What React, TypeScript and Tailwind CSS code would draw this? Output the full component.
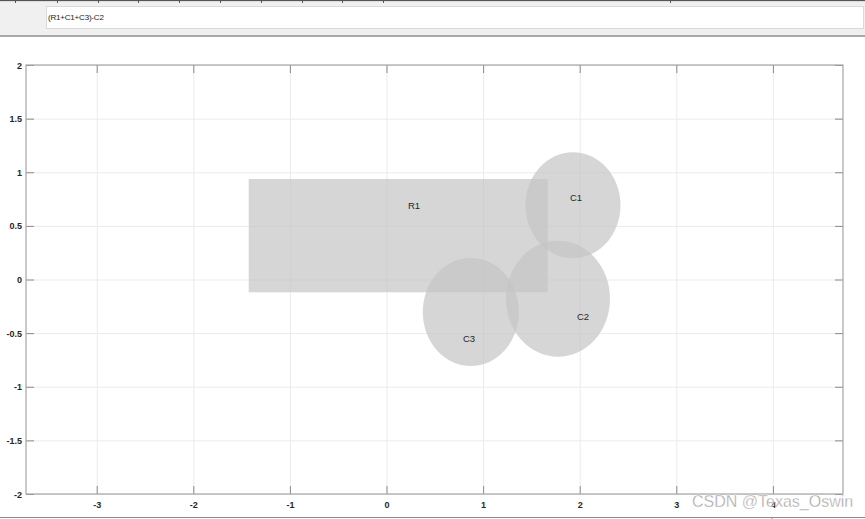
import React from "react";

const xTicks = [-3, -2, -1, 0, 1, 2, 3, 4];
const yTicks = [2, 1.5, 1, 0.5, 0, -0.5, -1, -1.5, -2];

// axes box in page pixels
const L = 26;
const R = 843;
const T = 65;
const B = 494;
const x0 = 387;
const xUnit = 96.6;
const y0 = 280;
const yUnit = 107.25;

const px = (v: number) => x0 + v * xUnit;
const py = (v: number) => y0 - v * yUnit;

const tabStops = [15, 57, 98, 138, 179, 220, 261, 302, 342, 383, 670];

const shapeFill = "#c4c4c4";

const Plot: React.FC = () => {
  return (
    <svg
      width={865}
      height={482}
      viewBox="0 37 865 482"
      className="block"
      style={{ fontFamily: '"Liberation Sans", Arial, sans-serif' }}
    >
      {/* grid */}
      {xTicks.map((t) => (
        <line key={"gx" + t} x1={px(t)} x2={px(t)} y1={T} y2={B} stroke="#ebebeb" strokeWidth={1} />
      ))}
      {yTicks.map((t) => (
        <line key={"gy" + t} x1={L} x2={R} y1={py(t)} y2={py(t)} stroke="#ebebeb" strokeWidth={1} />
      ))}

      {/* shapes */}
      <g fill={shapeFill} fillOpacity={0.7}>
        <rect x={248.7} y={179} width={299} height={113.3} />
        <ellipse cx={573} cy={205.3} rx={47.5} ry={53} />
        <ellipse cx={558} cy={298.7} rx={52} ry={58} />
        <ellipse cx={470.8} cy={312} rx={48} ry={54} />
      </g>
      <g fontSize={9.5} fill="#262626" textAnchor="middle">
        <text x={414} y={209}>R1</text>
        <text x={576} y={201}>C1</text>
        <text x={583} y={320}>C2</text>
        <text x={469} y={342}>C3</text>
      </g>

      {/* ticks */}
      {xTicks.map((t) => (
        <g key={"tx" + t} stroke="#8a8a8a">
          <line x1={px(t)} x2={px(t)} y1={T} y2={T + 8} />
          <line x1={px(t)} x2={px(t)} y1={B} y2={B - 8} />
        </g>
      ))}
      {yTicks.map((t) => (
        <g key={"ty" + t} stroke="#8a8a8a">
          <line x1={L} x2={L + 8} y1={py(t)} y2={py(t)} />
          <line x1={R} x2={R - 8} y1={py(t)} y2={py(t)} />
        </g>
      ))}

      {/* axes box */}
      <rect x={L} y={T} width={R - L} height={B - T} fill="none" stroke="#a6a6a6" strokeWidth={1.2} />

      {/* tick labels */}
      <g fontSize={9} fill="#262626" fontWeight={600}>
        {xTicks.map((t) => (
          <text key={"lx" + t} x={px(t)} y={508} textAnchor="middle">
            {t}
          </text>
        ))}
        {yTicks.map((t) => (
          <text key={"ly" + t} x={22} y={py(t) + 3} textAnchor="end">
            {t}
          </text>
        ))}
      </g>

      {/* bottom edge */}
      <line x1={0} x2={865} y1={517.5} y2={517.5} stroke="#8c8c8c" strokeWidth={1} />
      <line x1={772} x2={772} y1={517} y2={519} stroke="#8c8c8c" strokeWidth={1} />

      {/* watermark */}
      <text
        x={692}
        y={507}
        fontSize={16}
        fill="#a8a8a8"
        stroke="#ffffff"
        strokeWidth={0.3}
        style={{ fontFamily: '"Liberation Sans", Arial, sans-serif' }}
      >
        CSDN @Texas_Oswin
      </text>
    </svg>
  );
};

const App: React.FC = () => {
  return (
    <div className="w-[865px] h-[519px] bg-white overflow-hidden flex flex-col font-['Liberation_Sans',Arial,sans-serif]">
      {/* tab strip */}
      <div className="relative h-[2px] shrink-0 bg-[#dcdcdc] border-t border-[#555]">
        {tabStops.map((x) => (
          <span key={x} className="absolute top-0 h-[2px] w-px bg-[#555]" style={{ left: x }} />
        ))}
      </div>

      {/* expression bar */}
      <div className="h-[35px] shrink-0 bg-[#f0f0f0] border-b-2 border-[#a9a9a9] flex items-center pl-[46px] pr-[1px] pb-[2px]">
        <div className="flex-1 h-[23px] bg-white border border-[#d9d9d9] flex items-center px-[1px]">
          <span className="text-[8px] text-[#1a1a1a] tracking-[-0.2px]">(R1+C1+C3)-C2</span>
        </div>
      </div>

      <Plot />
    </div>
  );
};

export default App;
